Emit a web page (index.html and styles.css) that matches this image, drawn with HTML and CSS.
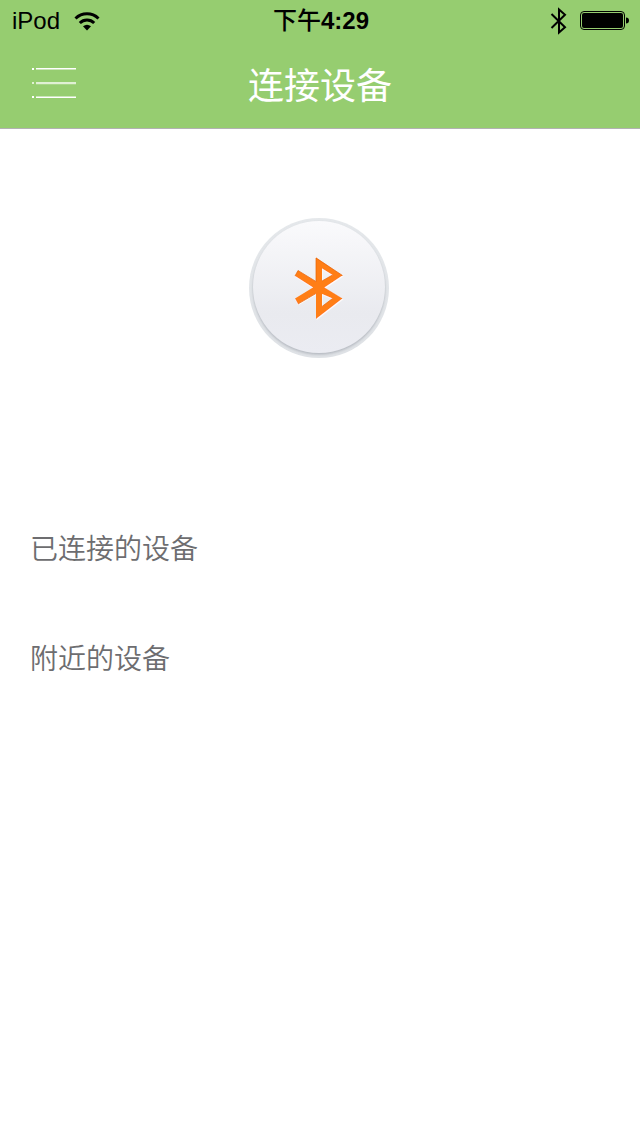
FILE: index.html
```html
<!DOCTYPE html>
<html lang="zh-CN">
<head>
<meta charset="utf-8">
<meta name="viewport" content="width=device-width, initial-scale=1">
<title>连接设备</title>
<link rel="stylesheet" href="styles.css">
</head>
<body>
<header class="header">
  <div class="status">
    <div class="status-left">
      <span>iPod</span>
      <svg width="26" height="19" viewBox="0 0 26 19" aria-hidden="true">
        <path d="M1.500 6.500A16.500 16.500 0 0 1 24.500 6.500" fill="none" stroke="#000" stroke-width="3"/>
        <path d="M5.800 11A10.300 10.300 0 0 1 20.200 11" fill="none" stroke="#000" stroke-width="3"/>
        <path d="M9 14.300Q13 11.200 17 14.300L13 18.500Z"/>
      </svg>
    </div>
    <time class="status-time"><span class="period">下午</span>4:29</time>
    <div class="status-right">
      <svg width="18" height="28" viewBox="0 0 18 28" aria-hidden="true">
        <path d="M1.500 7L15 20.200L9 25.500V2.500L15 7.800L1.500 21" fill="none" stroke="#000" stroke-width="2"/>
      </svg>
      <svg width="50" height="20" viewBox="0 0 50 20" aria-hidden="true">
        <rect x="0.500" y="0.500" width="44" height="18" rx="3.500" fill="none" stroke="#000"/>
        <rect x="2" y="2" width="41" height="15" rx="2"/>
        <path d="M46 6.500Q49 6.500 49 9.500T46 12.500Z"/>
      </svg>
    </div>
  </div>
  <nav class="navbar">
    <button class="menu" type="button" aria-label="菜单">
      <svg width="44" height="32" viewBox="0 0 44 32" fill="#fff" aria-hidden="true">
        <path d="M0 1h2v2H0zM4 1h40v1.500H4zM0 29h2v2H0zM4 29.500h40V31H4z"/>
        <path d="M0 15h2v2H0zM4 15h40v2.200H4z" opacity=".7"/>
      </svg>
    </button>
    <h1 class="title">连接设备</h1>
  </nav>
</header>
<main class="content">
  <div class="scan">
    <button class="scan-button" type="button" aria-label="蓝牙">
      <svg width="142" height="140" viewBox="0 0 142 140" aria-hidden="true">
        <defs>
          <linearGradient id="face" x1="0" y1="0" x2="0" y2="1">
            <stop offset="0" stop-color="#fafafc"/>
            <stop offset=".7" stop-color="#e9eaef"/>
            <stop offset="1" stop-color="#ebecf2"/>
          </linearGradient>
          <linearGradient id="rim" x1="0" y1="0" x2="0" y2="1">
            <stop offset="0" stop-color="#e5e8eb"/>
            <stop offset="1" stop-color="#dfe2e6"/>
          </linearGradient>
          <filter id="shade" x="-10%" y="-10%" width="120%" height="120%">
            <feDropShadow dx="0" dy="1.500" stdDeviation="1.200" flood-color="#9ca1aa" flood-opacity=".65"/>
          </filter>
          <filter id="edge" x="-10%" y="-10%" width="120%" height="120%">
            <feDropShadow dx="0.500" dy="1" stdDeviation="0.300" flood-color="#fff"/>
          </filter>
        </defs>
        <circle cx="70" cy="70" r="70" fill="url(#rim)"/>
        <circle cx="70" cy="69" r="66" fill="url(#face)" filter="url(#shade)"/>
        <path filter="url(#edge)" fill="#ff7e17" fill-rule="evenodd" d="M67 39.500L93.500 57.500L75.500 69.500L93.500 80.500L67 101V75.500L49 86L46 80.500L64 69.500L46 58L49 52.500L67 63.500ZM73 50.500V63L83.500 57ZM73 76V88.500L83.500 80.500Z"/>
        <path d="M67 40L93.500 57.500M46 58L49 52.500L67 63.500V40M73 63L83.500 57M67 75.500L49 86M73 88.500L83.500 80.500" fill="none" stroke="#e66300" stroke-width="0.700"/>
      </svg>
    </button>
  </div>
  <section class="group"><h2 class="group-title">已连接的设备</h2></section>
  <section class="group"><h2 class="group-title">附近的设备</h2></section>
</main>
</body>
</html>
```
FILE: styles.css
```css
* { box-sizing: border-box; }
body {
  margin: 0;
  background: #fff;
  color: #6d6d70;
  font-family: "Liberation Sans", "Noto Sans CJK SC", sans-serif;
}
button {
  padding: 0;
  border: 0;
  background: none;
  cursor: pointer;
}
svg { display: block; }
.header {
  background: #96cd70;
  border-bottom: 1px solid #b2b2b2;
}
.status {
  display: grid;
  grid-template-columns: 1fr auto 1fr;
  align-items: center;
  height: 42px;
  padding: 0 10px 0 12px;
  color: #000;
  font-size: 24px;
  line-height: 42px;
}
.status-left, .status-right {
  display: flex;
  align-items: center;
  gap: 12px;
}
.status-left { gap: 14px; }
.status-right { justify-content: flex-end; }
.status-time { font-weight: 700; }
.period { font-weight: 500; }
.navbar {
  display: grid;
  grid-template-columns: 1fr auto 1fr;
  align-items: center;
  height: 86px;
  padding: 0 32px 4px;
}
.menu { justify-self: start; }
.title {
  margin: 0;
  color: #fff;
  font-family: "Noto Sans CJK SC", sans-serif;
  font-size: 36px;
  font-weight: 400;
  line-height: 48px;
}
.scan {
  display: flex;
  justify-content: center;
  padding: 89px 0 134px;
}
.scan-button { border-radius: 50%; }
.group {
  height: 110px;
  padding: 32px 30px 0;
}
.group-title {
  margin: 0;
  font-family: "Noto Sans CJK SC", sans-serif;
  font-size: 28px;
  font-weight: 350;
  line-height: 46px;
}
```
